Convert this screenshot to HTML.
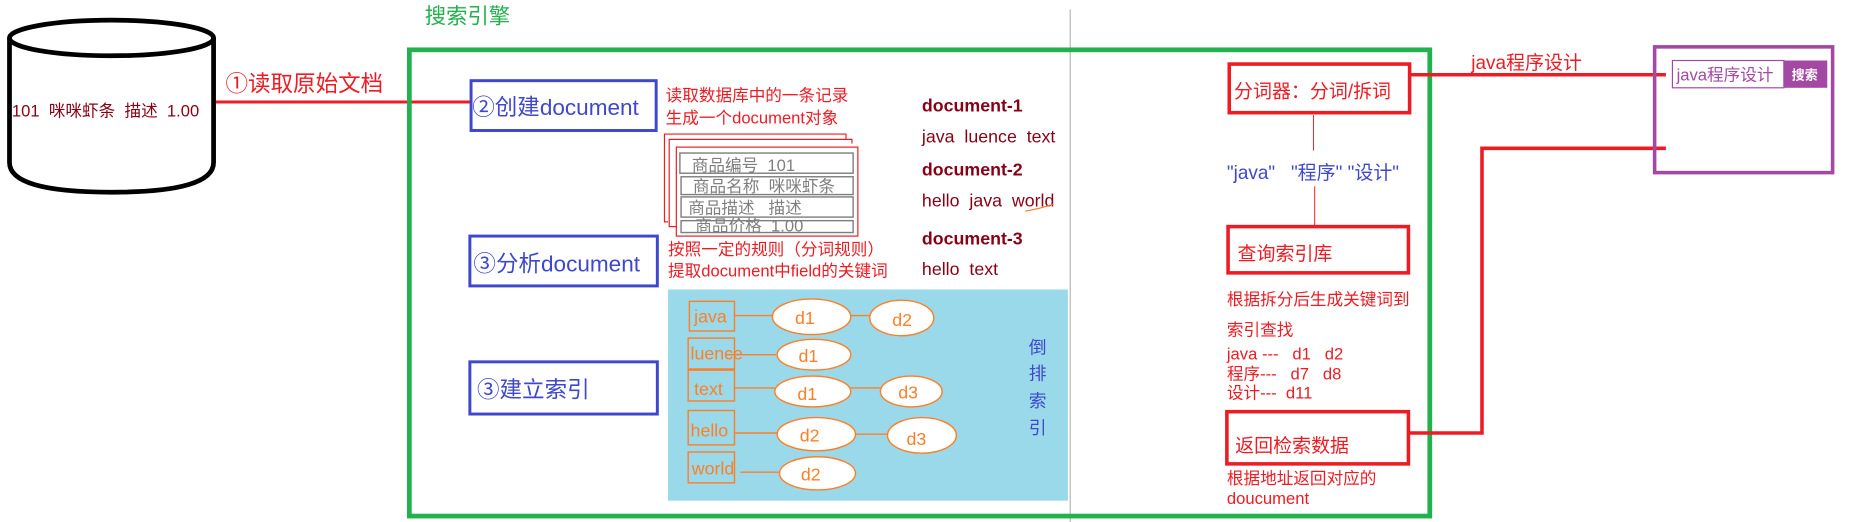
<!DOCTYPE html>
<html><head><meta charset="utf-8"><style>
html,body{margin:0;padding:0;background:#fff;width:1851px;height:522px;overflow:hidden}
svg{display:block}
text{font-family:"Liberation Sans","Noto Sans CJK SC",sans-serif;white-space:pre}
</style></head><body>
<svg width="1851" height="522" viewBox="0 0 1560 440" preserveAspectRatio="none" xmlns="http://www.w3.org/2000/svg" xml:space="preserve">
<line x1="902" y1="8" x2="902" y2="440" stroke="#c3c3c3" stroke-width="1.2"/>
<text x="358" y="20" font-size="18" fill="#22b14c">搜索引擎</text>
<g fill="none" stroke="#000" stroke-width="4">
<ellipse cx="94" cy="32" rx="86" ry="15"/>
<path d="M8 32 V137 Q8 162 94 162 Q180 162 180 137 V32"/>
</g>
<text x="10" y="98" font-size="14" fill="#880015">101  咪咪虾条  描述  1.00</text>
<line x1="182" y1="86" x2="398" y2="86" stroke="#ed1c24" stroke-width="2.5"/>
<text x="190" y="77" font-size="19" fill="#ed1c24">①读取原始文档</text>
<rect x="345" y="42" width="860" height="393" fill="none" stroke="#22b14c" stroke-width="4"/>
<g fill="none" stroke="#3f48cc" stroke-width="2.5">
<rect x="397" y="68" width="156" height="42"/>
<rect x="396" y="199" width="158" height="42"/>
<rect x="396" y="305" width="158" height="44"/>
</g>
<g font-size="19" fill="#3f48cc">
<text x="398" y="97">②创建document</text>
<text x="399" y="229">③分析document</text>
<text x="402" y="335">③建立索引</text>
</g>
<g font-size="14" fill="#ed1c24">
<text x="561" y="85">读取数据库中的一条记录</text>
<text x="561" y="104">生成一个document对象</text>
<text x="563" y="215">按照一定的规则（分词规则）</text>
<text x="563" y="233">提取document中field的关键词</text>
</g>
<g fill="none" stroke="#ed1c24" stroke-width="1">
<path d="M713 117 V113 H560 V187 H563"/>
<path d="M718 121 V117.5 H564 V191 H570"/>
<rect x="570" y="124" width="153" height="75" fill="#fff"/>
</g>
<g fill="none" stroke="#7f7f7f" stroke-width="1.2">
<rect x="573" y="129" width="146" height="17"/>
<rect x="574" y="149" width="145" height="15"/>
<rect x="574" y="166" width="145" height="17"/>
<rect x="574" y="186" width="145" height="10"/>
</g>
<g font-size="14" fill="#7f7f7f">
<text x="583" y="144">商品编号  101</text>
<text x="584" y="162">商品名称  咪咪虾条</text>
<text x="580" y="180">商品描述   描述</text>
<text x="586" y="195">商品价格  1.00</text>
</g>
<g font-size="15" fill="#880015">
<text x="777" y="94" font-weight="bold">document-1</text>
<text x="777" y="120">java  luence  text</text>
<text x="777" y="148" font-weight="bold">document-2</text>
<text x="777" y="174">hello  java  world</text>
<text x="777" y="206" font-weight="bold">document-3</text>
<text x="777" y="232">hello  text</text>
</g>
<path d="M864 178 Q876 176 888 172" stroke="#ff7f27" fill="none" stroke-width="1"/>
<rect x="563" y="244" width="337" height="178" fill="#99d9ea"/>
<g fill="none" stroke="#ff7f27" stroke-width="1.2">
<rect x="581" y="254" width="38" height="25"/>
<rect x="580" y="285" width="39" height="26"/>
<rect x="580" y="312" width="39" height="26"/>
<rect x="580" y="346" width="39" height="29"/>
<rect x="580" y="381" width="39" height="26"/>
<line x1="619" y1="266" x2="651" y2="266"/><line x1="717" y1="266" x2="734" y2="266"/>
<line x1="612" y1="299" x2="654" y2="299"/>
<line x1="619" y1="327" x2="653" y2="327"/><line x1="716" y1="327" x2="742" y2="327"/>
<line x1="619" y1="365" x2="656" y2="365"/><line x1="719" y1="366" x2="748" y2="366"/>
<line x1="624" y1="398" x2="658" y2="398"/>
</g>
<g fill="#fff" stroke="#ff7f27" stroke-width="1.2">
<ellipse cx="684" cy="267" rx="33" ry="15"/>
<ellipse cx="760" cy="268" rx="27" ry="15"/>
<ellipse cx="686" cy="299" rx="31" ry="13"/>
<ellipse cx="685" cy="330" rx="32" ry="13"/>
<ellipse cx="768" cy="330" rx="26" ry="13"/>
<ellipse cx="688" cy="366" rx="33" ry="14"/>
<ellipse cx="777" cy="367" rx="29" ry="15"/>
<ellipse cx="689" cy="399" rx="32" ry="14"/>
</g>
<g font-size="15" fill="#ff7f27">
<text x="585" y="272">java</text>
<text x="582" y="303">luence</text>
<text x="585" y="333">text</text>
<text x="582" y="368">hello</text>
<text x="583" y="400">world</text>
<text x="670" y="273">d1</text><text x="752" y="275">d2</text>
<text x="673" y="305">d1</text>
<text x="672" y="337">d1</text><text x="757" y="336">d3</text>
<text x="674" y="372">d2</text><text x="764" y="375">d3</text>
<text x="675" y="405">d2</text>
</g>
<g font-size="15" fill="#3f48cc">
<text x="867" y="298">倒</text><text x="867" y="320">排</text><text x="867" y="343">索</text><text x="867" y="366">引</text>
</g>
<g fill="none" stroke="#ed1c24" stroke-width="3">
<rect x="1036" y="54" width="152" height="41"/>
<rect x="1035" y="191" width="152" height="39"/>
<rect x="1034" y="347" width="153" height="44"/>
<line x1="1188" y1="63" x2="1404" y2="63"/>
<path d="M1187 365 H1249 V125 H1404"/>
</g>
<g stroke="#ed1c24" stroke-width="0.8"><line x1="1107" y1="97" x2="1107" y2="127"/><line x1="1108" y1="157" x2="1108" y2="192"/></g>
<g fill="#ed1c24">
<text x="1040" y="82" font-size="16">分词器：分词/拆词</text>
<text x="1240" y="58" font-size="16">java程序设计</text>
<text x="1043" y="219" font-size="16">查询索引库</text>
<text x="1041" y="381" font-size="16">返回检索数据</text>
<text x="1034" y="257" font-size="14">根据拆分后生成关键词到</text>
<text x="1034" y="283" font-size="14">索引查找</text>
<text x="1034" y="303" font-size="14">java ---   d1   d2</text>
<text x="1034" y="320" font-size="14">程序---   d7   d8</text>
<text x="1034" y="336" font-size="14">设计---  d11</text>
<text x="1034" y="408" font-size="14">根据地址返回对应的</text>
<text x="1034" y="425" font-size="14">doucument</text>
</g>
<text x="1034" y="151" font-size="16" fill="#3f48cc">"java"   "程序" "设计"</text>
<rect x="1394.5" y="39.5" width="150" height="106" fill="none" stroke="#a349a4" stroke-width="3"/>
<rect x="1409.5" y="51" width="94" height="23" fill="#fff" stroke="#a349a4" stroke-width="1"/>
<rect x="1503" y="51" width="37" height="23" fill="#a349a4"/>
<text x="1413" y="68" font-size="14" fill="#a349a4">java程序设计</text>
<text x="1510" y="67" font-size="11" font-weight="bold" fill="#fff">搜索</text>
</svg>
</body></html>
